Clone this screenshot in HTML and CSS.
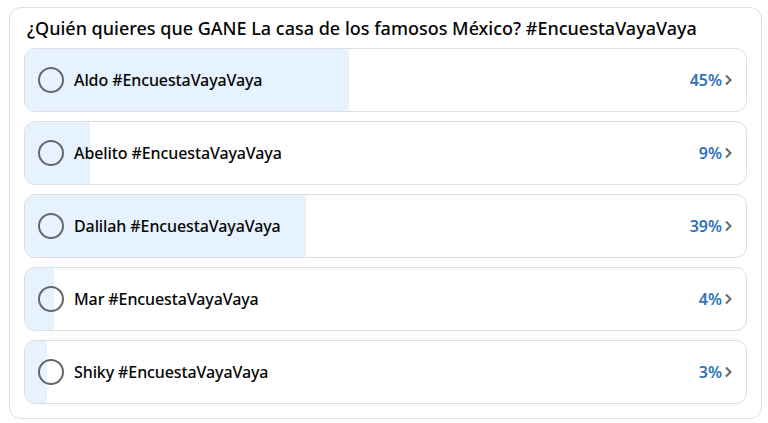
FILE: index.html
```html
<!DOCTYPE html>
<html lang="es">
<head>
  <meta charset="UTF-8" />
  <meta name="viewport" content="width=device-width, initial-scale=1" />
  <title>Encuesta</title>
  <link rel="stylesheet" href="styles.css">
</head>
<body>

<!-- encuesta -->
<div class="poll">
  <div class="poll-title">¿Quién quieres que GANE La casa de los famosos México? #EncuestaVayaVaya</div>

  <div class="options">
    <div class="option">
      <div class="fill" style="width: 45%"></div>
      <span class="radio"></span>
      <span class="label">Aldo #EncuestaVayaVaya</span>
      <span class="pct">45%</span>
      <svg class="chev" viewBox="0 0 8 12"><path d="M2 1.5 L6.5 6 L2 10.5" /></svg>
    </div>

    <div class="option">
      <div class="fill" style="width: 9%"></div>
      <span class="radio"></span>
      <span class="label">Abelito #EncuestaVayaVaya</span>
      <span class="pct">9%</span>
      <svg class="chev" viewBox="0 0 8 12"><path d="M2 1.5 L6.5 6 L2 10.5" /></svg>
    </div>

    <div class="option">
      <div class="fill" style="width: 39%"></div>
      <span class="radio"></span>
      <span class="label">Dalilah #EncuestaVayaVaya</span>
      <span class="pct">39%</span>
      <svg class="chev" viewBox="0 0 8 12"><path d="M2 1.5 L6.5 6 L2 10.5" /></svg>
    </div>

    <div class="option">
      <div class="fill" style="width: 4%"></div>
      <span class="radio"></span>
      <span class="label">Mar #EncuestaVayaVaya</span>
      <span class="pct">4%</span>
      <svg class="chev" viewBox="0 0 8 12"><path d="M2 1.5 L6.5 6 L2 10.5" /></svg>
    </div>

    <div class="option">
      <div class="fill" style="width: 3%"></div>
      <span class="radio"></span>
      <span class="label">Shiky #EncuestaVayaVaya</span>
      <span class="pct">3%</span>
      <svg class="chev" viewBox="0 0 8 12"><path d="M2 1.5 L6.5 6 L2 10.5" /></svg>
    </div>
  </div>
</div>

</body>
</html>
```

FILE: styles.css
```css
body, html {
  margin: 0;
  padding: 0;
  background: #fff;
  font-family: 'Noto Sans', 'Open Sans', sans-serif;
  color: #050505;
}

body {
  padding: 7px 6px 4px 9px;
}

.poll {
  border: 1px solid #dcdfe3;
  border-radius: 12px;
  padding: 8px 14px 14px 14px;
  height: 388px;
}

.poll-title {
  font-size: 18px;
  font-weight: 500;
  line-height: 24px;
  padding-left: 3px;
  margin-bottom: 8px;
}

.options {
  display: flex;
  flex-direction: column;
  gap: 9px;
}

.option {
  position: relative;
  display: flex;
  align-items: center;
  height: 62px;
  border: 1px solid #dadde1;
  border-radius: 11px;
  overflow: hidden;
  padding: 0 14px 0 13px;
}

.fill {
  position: absolute;
  top: 0;
  left: 0;
  bottom: 0;
  background: #e6f2fe;
}

.radio, .label, .pct, .chev {
  position: relative;
}

.radio {
  width: 22px;
  height: 22px;
  border: 2px solid #65676b;
  border-radius: 50%;
  flex: none;
}

.label {
  margin-left: 10px;
  font-size: 16px;
  font-weight: 500;
  letter-spacing: -0.1px;
  flex: 1;
}

.pct {
  font-size: 16px;
  font-weight: 600;
  color: #2f73b8;
}

.chev {
  width: 8px;
  height: 12px;
  margin-left: 2px;
  fill: none;
  stroke: #65676b;
  stroke-width: 2;
}
```
